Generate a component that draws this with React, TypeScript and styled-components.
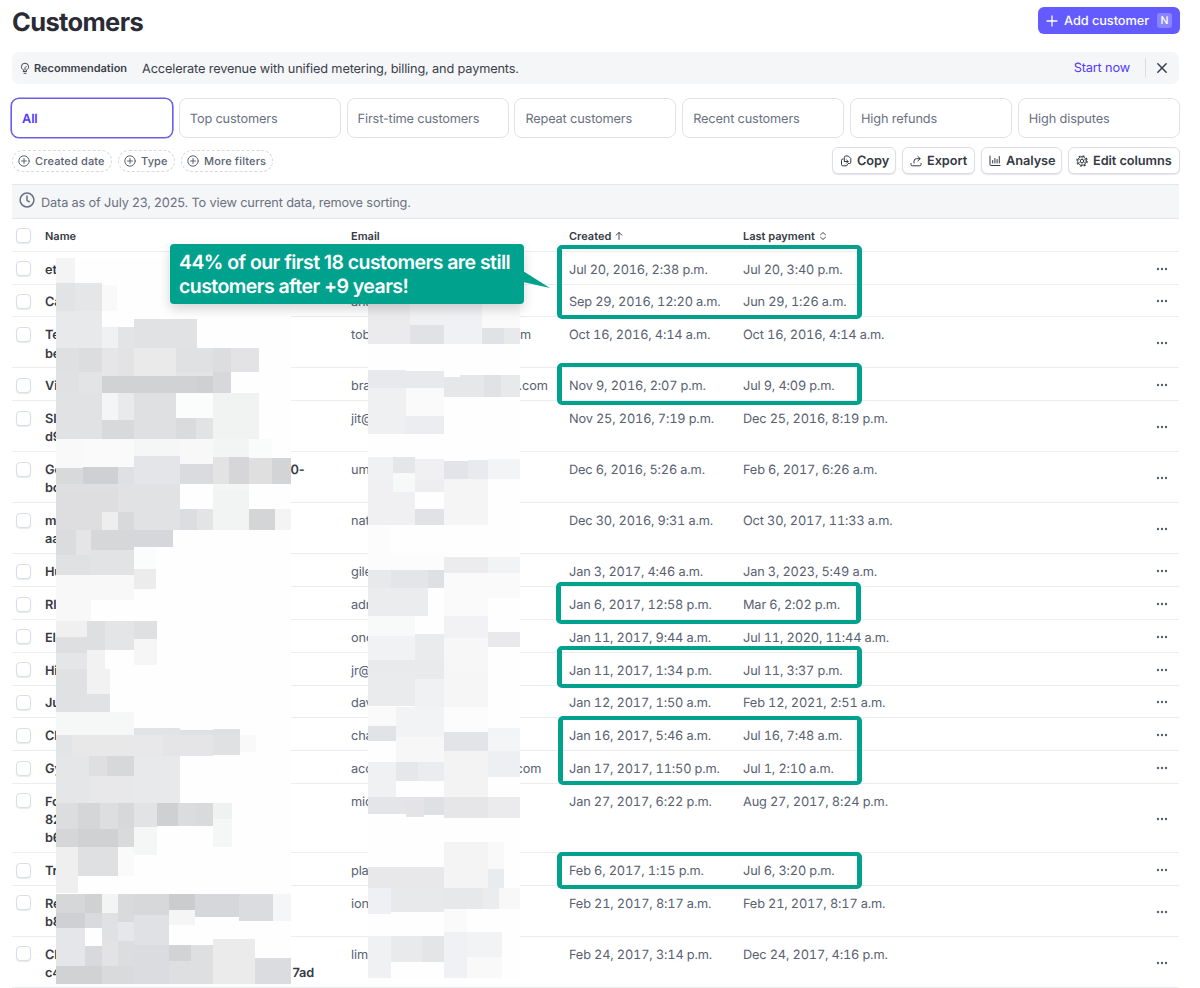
import React from 'react';
import styled, { createGlobalStyle } from 'styled-components';

const Global = createGlobalStyle`
  * { box-sizing: border-box; }
  body { margin: 0; background: #fff; overflow: hidden; text-rendering: geometricPrecision; }
  button { text-rendering: inherit; letter-spacing: inherit; }
`;

const teal = '#00a28e';

const Page = styled.main`
  position: relative;
  width: 1200px;
  height: 988px;
  padding: 7px 20px 0 12px;
  overflow: hidden;
  display: flex;
  flex-direction: column;
  font-family: Inter, 'Liberation Sans', sans-serif;
  font-size: 12.75px;
  letter-spacing: -0.15px;
  color: #596171;
  background: #fff;
`;

const Header = styled.header`
  display: flex;
  justify-content: space-between;
  align-items: flex-start;
  height: 45px;
`;

const Title = styled.h1`
  margin: 1px 0 0;
  font-size: 25.5px;
  line-height: 30px;
  font-weight: 700;
  letter-spacing: -0.65px;
  color: #2b2b36;
`;

const AddButton = styled.button`
  display: flex;
  align-items: center;
  height: 27px;
  width: 142px;
  padding: 0 8px;
  border: 0;
  border-radius: 6px;
  background: #635bff;
  color: #fff;
  font: 500 12.75px/18px Inter, sans-serif;
  letter-spacing: -0.05px;
  white-space: nowrap;
`;

const AddLabel = styled.span`
  margin: 3px 0 0 6px;
  flex: 1;
  text-align: left;
`;

const Key = styled.kbd`
  width: 15px;
  height: 15px;
  border-radius: 3px;
  background: #8a84ff;
  font: 500 10.5px/15px Inter, sans-serif;
  text-align: center;
`;

const Banner = styled.section`
  display: flex;
  align-items: center;
  height: 32px;
  margin-right: 1px;
  padding: 0 11px 0 7px;
  border-radius: 7px;
  background: #f5f6f8;
  color: #3b3f4b;
`;

const BannerTag = styled.strong`
  margin: 0 15px 0 3px;
  width: 93px;
  font-size: 11px;
  font-weight: 600;
  letter-spacing: 0;
  white-space: nowrap;
`;

const BannerText = styled.span`
  flex: 1;
  padding-top: 3px;
`;

const StartLink = styled.a`
  color: #533afd;
  padding: 3px 15px 0 0;
  margin-right: 10px;
  line-height: 16px;
  border-right: 1px solid #d8dee4;
`;

const Segments = styled.nav`
  display: grid;
  grid-template-columns: repeat(7, 162px);
  gap: 5.8px;
  margin: 14px 0 0 -1px;
`;

const Segment = styled.button<{ $active?: boolean }>`
  height: 40px;
  padding: 4px 0 0 10px;
  text-align: left;
  border: 1px solid #dfe3ea;
  border-radius: 8px;
  background: #fff;
  color: ${p => (p.$active ? '#533afd' : '#6a7182')};
  font: ${p => (p.$active ? 600 : 400)} 12.75px/18px Inter, sans-serif;
  ${p => p.$active && 'border-color: #6a5de8; box-shadow: 0 0 0 0.6px #6a5de8;'}
`;

const Toolbar = styled.div`
  display: flex;
  justify-content: space-between;
  align-items: center;
  height: 28px;
  margin-top: 9px;
`;

const Cluster = styled.div<{ $gap: number }>`
  display: flex;
  gap: ${p => p.$gap}px;
`;

const Chip = styled.button<{ $width: number }>`
  display: flex;
  align-items: center;
  gap: 5px;
  width: ${p => p.$width}px;
  height: 22px;
  padding: 0 0 0 5px;
  border: 1px dashed #d5dbe3;
  border-radius: 11px;
  background: #fff;
  color: #596171;
  font: 500 11px/16px Inter, sans-serif;
  letter-spacing: 0.15px;
  white-space: nowrap;
`;

const ToolButton = styled.button<{ $width: number }>`
  display: flex;
  align-items: center;
  gap: 5px;
  width: ${p => p.$width}px;
  height: 27px;
  padding: 3px 0 0 7px;
  border: 1px solid #dcdfe6;
  border-radius: 6px;
  background: #fff;
  box-shadow: 0 1px 1px rgba(40, 45, 60, 0.13);
  color: #353a44;
  font: 600 12.75px/18px Inter, sans-serif;
  letter-spacing: -0.05px;
  white-space: nowrap;
  svg { margin-top: -3px; }
`;

const Notice = styled.div`
  display: flex;
  align-items: center;
  gap: 6px;
  height: 35px;
  margin: 9px 1px 0 0;
  padding: 4px 7px 0;
  border-top: 1px solid #e3e6ea;
  border-bottom: 1px solid #e3e6ea;
  background: #f5f6f8;
  color: #6a7182;
  svg { margin-top: -6px; }
`;

const Row = styled.div<{ $lines: number }>`
  display: grid;
  grid-template-columns: 33px 306px 218px 174px 1fr 30px;
  height: ${p => 32.85 + 18.2 * (p.$lines - 1)}px;
  margin-right: 1px;
  padding-top: 9.85px;
  border-bottom: 1px solid #ebedf0;
  line-height: 18.2px;
  white-space: nowrap;
`;

const HeadRow = styled(Row)`
  height: 33px;
  padding-top: 8px;
  color: #353a44;
  font-size: 11px;
  font-weight: 600;
  letter-spacing: 0;
`;

const Check = styled.span<{ $head?: boolean }>`
  width: 15px;
  height: 15px;
  margin: ${p => (p.$head ? 1.5 : -0.4)}px 0 0 4px;
  border: 1px solid #d8dee4;
  border-radius: 4px;
  background: #fff;
  box-shadow: 0 1px 1px rgba(40, 45, 60, 0.1);
`;

const Name = styled.div`
  color: #353a44;
  font-weight: 600;
`;

const NameLine = styled.div`
  display: flex;
`;

const Lead = styled.span<{ $width: number }>`
  width: ${p => p.$width}px;
`;

const HeadCell = styled.span`
  display: flex;
  align-items: center;
  gap: 4px;
  height: 18px;
`;

const Stamp = styled.span`
  font-variant-numeric: tabular-nums;
`;

const More = styled.span`
  display: flex;
  align-items: center;
  justify-content: center;
  height: calc(100% + 10px);
  margin-top: -9px;
  padding: 0 3.5px 0 0;
`;

const Redaction = styled.svg`
  position: absolute;
  left: 0;
  top: 0;
  pointer-events: none;
`;

const Highlight = styled.div<{ $x: number; $y: number; $w: number; $h: number }>`
  position: absolute;
  left: ${p => p.$x}px;
  top: ${p => p.$y}px;
  width: ${p => p.$w}px;
  height: ${p => p.$h}px;
  border: 5px solid ${teal};
  border-width: 4px 5px;
  border-radius: 5px;
`;

const Callout = styled.div`
  position: absolute;
  left: 170px;
  top: 244px;
  width: 354px;
  height: 60px;
  padding: 6px 9px;
  border-radius: 4px;
  background: ${teal};
  color: #fff;
  box-shadow: 0 5px 12px rgba(0, 0, 0, 0.16);
  font: 600 19.5px/24px Inter, sans-serif;
  letter-spacing: -0.56px;
  white-space: nowrap;
`;

const Pointer = styled.svg`
  position: absolute;
  left: 353px;
  top: 27px;
`;

type Customer = { name: string[]; email: string; end?: string; tail?: string; created: string; paid: string };

const customers: Customer[] = [
  { name: ['et'], email: '', created: 'Jul 20, 2016, 2:38 p.m.', paid: 'Jul 20, 3:40 p.m.' },
  { name: ['Ca'], email: 'ana', created: 'Sep 29, 2016, 12:20 a.m.', paid: 'Jun 29, 1:26 a.m.' },
  { name: ['Te', 'be'], email: 'tob', end: 'm', created: 'Oct 16, 2016, 4:14 a.m.', paid: 'Oct 16, 2016, 4:14 a.m.' },
  { name: ['Vi'], email: 'bra', end: '.com', created: 'Nov 9, 2016, 2:07 p.m.', paid: 'Jul 9, 4:09 p.m.' },
  { name: ['Sl', 'd9'], email: 'jit@', created: 'Nov 25, 2016, 7:19 p.m.', paid: 'Dec 25, 2016, 8:19 p.m.' },
  { name: ['Go', 'bo'], tail: '0-', email: 'um', created: 'Dec 6, 2016, 5:26 a.m.', paid: 'Feb 6, 2017, 6:26 a.m.' },
  { name: ['m', 'aa'], email: 'nat', created: 'Dec 30, 2016, 9:31 a.m.', paid: 'Oct 30, 2017, 11:33 a.m.' },
  { name: ['Hu'], email: 'gile', created: 'Jan 3, 2017, 4:46 a.m.', paid: 'Jan 3, 2023, 5:49 a.m.' },
  { name: ['Rl'], email: 'adr', created: 'Jan 6, 2017, 12:58 p.m.', paid: 'Mar 6, 2:02 p.m.' },
  { name: ['El'], email: 'onc', created: 'Jan 11, 2017, 9:44 a.m.', paid: 'Jul 11, 2020, 11:44 a.m.' },
  { name: ['Hi'], email: 'jr@', created: 'Jan 11, 2017, 1:34 p.m.', paid: 'Jul 11, 3:37 p.m.' },
  { name: ['Ju'], email: 'dav', created: 'Jan 12, 2017, 1:50 a.m.', paid: 'Feb 12, 2021, 2:51 a.m.' },
  { name: ['Cl'], email: 'cha', created: 'Jan 16, 2017, 5:46 a.m.', paid: 'Jul 16, 7:48 a.m.' },
  { name: ['Gy'], email: 'acc', end: 'com', created: 'Jan 17, 2017, 11:50 p.m.', paid: 'Jul 1, 2:10 a.m.' },
  { name: ['Fo', '82', 'b6'], email: 'mic', created: 'Jan 27, 2017, 6:22 p.m.', paid: 'Aug 27, 2017, 8:24 p.m.' },
  { name: ['Tr'], email: 'pla', created: 'Feb 6, 2017, 1:15 p.m.', paid: 'Jul 6, 3:20 p.m.' },
  { name: ['Re', 'b8'], email: 'ion', created: 'Feb 21, 2017, 8:17 a.m.', paid: 'Feb 21, 2017, 8:17 a.m.' },
  { name: ['Cl', 'c4'], tail: '7ad', email: 'lim', created: 'Feb 24, 2017, 3:14 p.m.', paid: 'Dec 24, 2017, 4:16 p.m.' },
];

// Mosaic tiles, in thirds of a pixel from each patch's origin: left top right bottom colour.
const patches = [
  { x: 0, y: 240, tiles: `168 54 224 130 f4f4f5,168 129 224 212 e2e3e5,224 129 306 212 e5e6e8,306 135 351 212 f9f9fa,168 212 306 324 e8e9eb,306 262 355 324 f0f1f2,355 262 402 324 e3e4e6,402 238 591 324 e1e2e4,168 324 236 395 dfe0e2,236 324 306 395 dcdddf,306 324 355 408 e6e6e8,355 324 402 408 e3e3e5,402 324 528 408 eaeaea,528 324 639 395 e0e1e3,639 324 692 395 dcdddf,692 324 778 395 e3e3e5,168 395 236 458 e0e1e2,236 395 306 458 e3e4e6,306 408 591 459 d1d2d4,591 408 639 459 cfd0d2,639 395 692 459 d7d8da,528 395 639 408 e3e4e6,168 458 306 597 e1e2e4,306 459 355 540 f4f5f6,355 459 402 540 e9eaeb,402 459 528 597 dfe0e2,528 459 639 533 fbfdfd,639 460 778 597 f1f3f3,306 540 402 597 d8d9db,528 533 589 597 dadbdd,589 533 639 597 e2e3e5,168 597 250 683 f9f9fa,250 597 402 680 fafafa,402 597 541 647 f5f6f6,541 597 639 672 f8f8f9,639 597 748 651 f3f4f4,748 597 817 655 fafbfb,402 647 541 731 e4e5e8,168 683 250 731 d8d9db,250 680 355 731 cfd0d3,355 680 402 731 dfe0e3,541 672 639 731 dadbde,639 651 687 731 e3e3e3,687 651 748 731 d6d6d8,748 655 817 731 dfdfdf,817 655 873 731 d3d4d6,168 731 355 780 dfdee1,355 731 402 780 e2e2e4,402 731 541 780 e1e2e5,639 731 748 780 f4f5f5` },
  { x: 0, y: 490, tiles: `168 0 355 119 dedddf,355 0 402 66 e2e2e4,402 0 541 119 e1e2e4,639 0 748 119 f2f4f4,306 66 355 119 eeeeee,355 66 402 119 d8d9db,541 58 591 119 dcdde0,591 58 639 119 e3e4e6,748 58 825 119 d4d5d7,825 58 873 119 f4f4f4,168 119 227 195 dbdcde,227 119 274 195 e5e5e8,274 119 402 180 d6d7d9,402 119 519 170 d6d7da,402 170 468 238 fbfdfc,402 238 468 296 ececed,274 180 402 254 e2e3e5,168 195 274 254 e0e1e3,168 254 402 330 f9f8f8,168 330 274 393 f8f8f8,168 393 260 440 f1f0f0,260 393 316 481 dedfe1,316 393 402 481 e4e5e7,402 393 472 447 dfe0e2,402 447 472 525 f6f6f7,168 440 260 488 dedfe1,168 488 260 538 e5e6e8,260 481 316 538 f2f2f3,168 538 260 665 dfe1e3,260 538 330 612 f2f2f3,260 612 330 665 e1e2e4,168 665 402 735 f6f7f7,168 735 402 750 e2e3e5,402 715 541 750 e2e3e5,541 720 639 750 dfe0e2,639 718 720 750 dfe0e2` },
  { x: 0, y: 735, tiles: `168 0 215 64 e3e4e6,215 0 268 64 e8e8e9,268 0 402 64 e9e8e9,402 0 490 64 e8e8ea,490 0 639 64 e5e4e6,639 0 720 59 e0e1e3,720 0 768 50 f9f9fa,168 64 268 204 e5e6e8,268 64 320 122 dfdfe1,320 64 402 122 d7d8da,402 64 541 204 e8e9eb,268 122 402 204 e8e8ea,168 204 233 282 dcdddf,233 204 299 282 d5d6d8,299 204 355 282 dddee0,355 204 402 275 d7d8da,402 204 471 275 e2e3e5,471 204 533 272 cfd0d2,533 204 589 272 dbdcde,589 204 639 272 d9dadc,639 204 695 252 f0f1f1,639 252 695 336 f5f6f6,402 275 471 360 f5f6f6,168 282 233 336 d5d6d8,233 282 355 336 d0d1d3,355 275 402 336 d9dadc,168 336 233 475 f0efef,233 336 355 423 dfe0e2,355 336 402 423 f9faf9,168 476 256 533 d6d7d9,256 476 306 533 d0d1d3,306 476 355 533 f3f4f4,355 476 402 562 d9dadc,402 476 508 540 d7d8da,508 476 586 525 cbccce,586 476 718 546 d6d7da,718 476 818 559 dbdcdf,818 476 873 559 f5f6f7,168 533 256 579 ced0d4,256 533 306 579 d9dadd,306 533 355 617 dfe1e3,355 562 402 617 e6e7ea,402 540 508 629 e0e1e4,508 525 584 571 f5f5f5,168 579 256 692 e5e6e9,256 633 306 692 d8d9dc,306 617 355 692 e3e3e5,355 617 402 692 dcdddf,402 629 508 748 dbdcdf,508 629 573 677 d2d3d5,573 629 639 677 dedfe1,508 677 639 748 dedfe1,639 611 766 748 ebebeb,766 670 873 748 dbdcdf,168 692 306 748 d1d2d4,306 692 402 748 d9dadc` },
  { x: 330, y: 225, tiles: `115 225 241 356 ebebee,241 225 342 301 f0f1f3,241 301 342 356 e1e2e6,342 225 456 356 f0f1f4,456 225 570 310 fafafb,456 310 522 356 e1e2e5,522 310 570 356 e8e9eb,115 436 229 490 e8e9ec,229 438 342 490 e8e9ec,342 456 390 515 e6e7e9,390 450 463 515 e6e7e9,463 450 513 515 e1e2e5,513 450 570 515 e8e9eb,115 490 229 628 eff0f2,229 490 342 572 fafafa,229 572 342 628 ecedf0,115 696 189 780 f0f1f3,189 696 255 743 e5e6e8,189 743 255 780 f8f9f9,255 703 342 780 f0f0f3,342 708 415 761 e3e4e9,415 706 475 761 e9eaed,475 702 570 761 f3f4f6,342 761 475 780 f4f4f5` },
  { x: 330, y: 480, tiles: `115 0 189 135 f0f0f2,189 0 255 37 f7f9f8,255 0 342 37 eeeef1,189 37 255 135 f0f0f2,255 86 342 135 e1e2e5,342 0 475 135 f5f5f6,115 135 182 220 fcfcfc,115 220 342 270 fcfcfc,342 230 475 280 ececee,475 232 570 280 f2f3f4,115 270 182 323 e8e9eb,182 270 295 323 e4e5e8,295 270 342 323 dee0e3,115 323 295 407 ebecee,342 280 475 407 fafafa,475 280 570 355 fafafa,115 407 255 468 f8f9f9,342 407 475 475 f2f2f4,475 456 570 500 e9e9eb,115 468 255 541 f1f2f3,255 462 342 541 eaebed,342 475 475 556 f7f7f8,115 541 342 598 e9eaec,115 598 255 678 eaebed,255 598 342 680 f0f1f2,342 556 475 680 f6f6f7,115 680 198 737 fafafa,198 680 342 780 f2f3f5,115 737 198 780 e2e3e7,342 680 475 757 fcfcfc,342 757 475 780 e3e4e8,475 744 570 780 f3f4f6` },
  { x: 330, y: 735, tiles: `115 0 198 18 e1e2e6,198 5 342 82 f7f7f8,342 0 475 47 e3e4e8,475 0 570 47 f4f5f7,475 47 570 125 eeeff2,342 47 475 187 f3f3f4,115 82 198 187 f0f1f3,198 82 263 138 e6e7ea,263 82 342 138 ebecef,115 187 229 238 e4e5e8,229 187 281 245 e4e4e6,281 187 342 240 dfe0e4,342 187 475 248 e6e6e8,475 187 570 248 ebebed,342 320 475 459 f4f4f5,475 320 522 402 f9f9f9,475 402 522 459 eaebed,115 396 342 459 e8e8ea,115 459 182 537 eff0f3,182 459 342 530 e8e9eb,342 459 460 522 e7e8ea,460 459 508 522 ebeced,508 459 570 523 f8f8f9,342 522 410 590 fafafb,115 603 182 730 f0f1f3,182 603 277 681 e9eaec,277 603 342 681 e4e5e7,342 591 410 730 f0f1f4,410 591 517 665 f2f3f5,410 665 517 730 f9f9fa` },
].map(p => ({ ...p, tiles: p.tiles.split(',').map(t => t.split(' ')) }));

const Mosaic = () => (
  <Redaction width="540" height="988" shapeRendering="crispEdges" aria-hidden>
    <rect x="56" y="258" width="235" height="727" fill="#fefefe" />
    <rect x="368.4" y="290" width="151.4" height="689" fill="#fefefe" />
    {patches.map(p => (
      <g key={`${p.x}-${p.y}`} transform={`translate(${p.x} ${p.y}) scale(${1 / 3})`}>
        {p.tiles.map(([l, t, r, b, c], i) => (
          <rect key={i} x={l} y={t} width={+r - +l} height={+b - +t} fill={`#${c}`} />
        ))}
      </g>
    ))}
  </Redaction>
);

const Icon = ({ size = 12, box = 12, stroke = 1, children }: { size?: number; box?: number; stroke?: number; children: React.ReactNode }) => (
  <svg width={size} height={size} viewBox={`0 0 ${box} ${box}`} fill="none" stroke="currentColor" strokeWidth={stroke} strokeLinecap="round" strokeLinejoin="round">
    {children}
  </svg>
);

const CirclePlus = () => (
  <Icon><circle cx="6" cy="6" r="5.2" /><path d="M6 3.5v5M3.5 6h5" /></Icon>
);

const boxes = [
  [557, 245, 305, 74],
  [557, 363, 305, 42],
  [556, 582, 305, 42],
  [557, 646, 305, 42],
  [558, 716, 304, 69],
  [557, 852, 305, 37],
];

export default function App() {
  return (
    <Page>
      <Global />
      <Header>
        <Title>Customers</Title>
        <AddButton>
          <Icon stroke={1.3}><path d="M6 1v10M1 6h10" /></Icon>
          <AddLabel>Add customer</AddLabel>
          <Key>N</Key>
        </AddButton>
      </Header>

      <Banner>
        <Icon size={12} box={12} stroke={0.95}>
          <path d="M4.5 8C3 7.2 2.4 6.200 2.4 4.800a3.600 3.600 0 0 1 7.200 0c0 1.400-.6 2.400-2.100 3.200v1.500h-3zM5 11.300h2M6 8V5.800l1.200-1.400" />
        </Icon>
        <BannerTag>Recommendation</BannerTag>
        <BannerText>Accelerate revenue with unified metering, billing, and payments.</BannerText>
        <StartLink>Start now</StartLink>
        <Icon stroke={1.5}><path d="M1.8 1.8l8.4 8.4M10.2 1.8l-8.4 8.4" /></Icon>
      </Banner>

      <Segments>
        {['All', 'Top customers', 'First-time customers', 'Repeat customers', 'Recent customers', 'High refunds', 'High disputes'].map((s, i) => (
          <Segment key={s} $active={i === 0}>{s}</Segment>
        ))}
      </Segments>

      <Toolbar>
        <Cluster $gap={6}>
          <Chip $width={100}><CirclePlus />Created date</Chip>
          <Chip $width={57}><CirclePlus />Type</Chip>
          <Chip $width={92}><CirclePlus />More filters</Chip>
        </Cluster>
        <Cluster $gap={6}>
          <ToolButton $width={64}>
            <Icon>
              <path d="M4.3 6.5V2.3A1.3 1.3 0 0 1 5.6 1h2.7l2.5 2.5v3.7a1.3 1.3 0 0 1-1.3 1.3H8.3M3 4a1.3 1.3 0 0 0-1.5 1.3v4.2a1.3 1.3 0 0 0 1.3 1.3h3.4a1.3 1.3 0 0 0 1.3-1.3M4.5 6.5H8M6.5 4.8l1.7 1.7-1.7 1.7" />
            </Icon>
            Copy
          </ToolButton>
          <ToolButton $width={73}>
            <Icon><path d="M1 8.5v1a1.3 1.3 0 0 0 1.3 1.3h7.4A1.3 1.3 0 0 0 11 9.5v-1M4 8V6.2A2.5 2.5 0 0 1 6.5 3.7H10M7.9 1.5l2.3 2.2-2.3 2.2" /></Icon>
            Export
          </ToolButton>
          <ToolButton $width={81}>
            <Icon><path d="M1 1v8.700a.8.8 0 0 0 .8.8H11M3.700 8V5.500M5.900 8V3.500M8.100 8V4.500M10.300 8V1.500" /></Icon>
            Analyse
          </ToolButton>
          <ToolButton $width={112}>
            <Icon stroke={0.9}>
              <circle cx="6" cy="6" r="4.3" />
              <circle cx="6" cy="6" r="5.2" strokeWidth="1.1" strokeDasharray="2 2.08" strokeLinecap="butt" />
              <circle cx="6" cy="6" r="1.7" />
              <path d="M6 1.7v2.6M6 7.7v2.6M2.3 3.9l2.2 1.2M7.5 6.9l2.2 1.2M2.3 8.1l2.2-1.2M7.5 5.1l2.2-1.2" strokeWidth="0.6" />
            </Icon>
            Edit columns
          </ToolButton>
        </Cluster>
      </Toolbar>

      <Notice>
        <Icon size={16} box={16} stroke={1.5}><circle cx="8" cy="8" r="6.9" /><path d="M8 4v4.3l2.3 1.5" /></Icon>
        Data as of July 23, 2025. To view current data, remove sorting.
      </Notice>

      <HeadRow $lines={1}>
        <Check $head />
        <HeadCell>Name</HeadCell>
        <HeadCell>Email</HeadCell>
        <HeadCell>Created <Icon size={8} box={8} stroke={0.9}><path d="M4 7.5v-7M1 3.2L4 .5l3 2.7" /></Icon></HeadCell>
        <HeadCell>Last payment <Icon size={8} box={8} stroke={0.9}><path d="M1.5 2.8L4 .5l2.5 2.3M1.5 5.2L4 7.5l2.5-2.3" /></Icon></HeadCell>
      </HeadRow>

      {customers.map((c, i) => (
        <Row key={i} $lines={c.name.length}>
          <Check />
          <Name>
            {c.name.map((n, j) => (
              <NameLine key={j}>
                <Lead $width={c.tail === '7ad' ? 247.5 : 245.5}>{n}</Lead>
                {c.tail && j === (c.tail === '7ad' ? 1 : 0) && c.tail}
              </NameLine>
            ))}
          </Name>
          <NameLine>
            <Lead $width={c.end === 'm' ? 169 : c.end === 'com' ? 164.5 : 167.5}>{c.email}</Lead>
            {c.end}
          </NameLine>
          <Stamp>{c.created}</Stamp>
          <Stamp>{c.paid}</Stamp>
          <More>
            <svg width="12" height="4" viewBox="0 0 12 4" fill="#596171"><circle cx="2" cy="2" r="1.2" /><circle cx="6" cy="2" r="1.2" /><circle cx="10" cy="2" r="1.2" /></svg>
          </More>
        </Row>
      ))}

      <Mosaic />
      {boxes.map(([x, y, w, h]) => <Highlight key={y} $x={x} $y={y} $w={w} $h={h} />)}
      <Callout>
        44% of our first 18 customers are still<br />customers after +9 years!
        <Pointer width="28" height="20" viewBox="0 0 28 20"><path d="M0 0L27 17 0 11z" fill={teal} /></Pointer>
      </Callout>
    </Page>
  );
}
